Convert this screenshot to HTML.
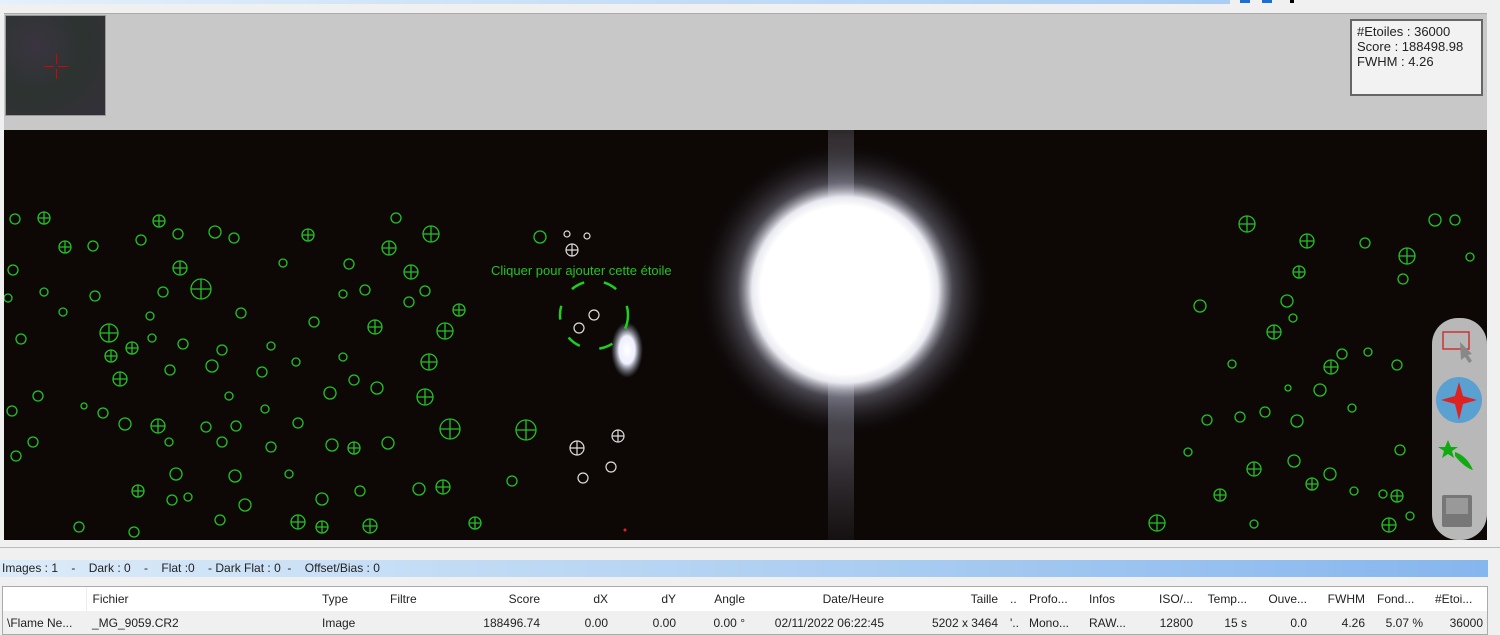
<!DOCTYPE html>
<html><head><meta charset="utf-8"><style>
*{margin:0;padding:0;box-sizing:border-box}
body{width:1500px;height:635px;overflow:hidden;background:#f0f0f0;font-family:"Liberation Sans",sans-serif;position:relative}
.a{position:absolute}
table{border-collapse:collapse;font-size:12px;color:#222}
td{height:24px;padding:0 6px;white-space:nowrap;overflow:hidden}
</style></head><body>
<div class="a" style="left:0;top:0;width:1230px;height:4px;background:linear-gradient(90deg,#e4f0fb,#a9cdf3)"></div>
<div class="a" style="left:1240px;top:0;width:10px;height:3px;background:#1a6fd0"></div>
<div class="a" style="left:1262px;top:0;width:10px;height:3px;background:#1a6fd0"></div>
<div class="a" style="left:1290px;top:0;width:4px;height:3px;background:#000"></div>
<div class="a" style="left:4px;top:13px;width:1483px;height:118px;background:#c8c8c8;border-top:1px solid #aaa"></div>
<div class="a" style="left:5px;top:15px;width:101px;height:101px;background:radial-gradient(circle at 30% 30%,#3a3440,#2c3330 50%,#35303a);border:1px solid #999"></div>
<div class="a" style="left:44px;top:66px;width:10px;height:1px;background:#d00"></div>
<div class="a" style="left:58px;top:66px;width:10px;height:1px;background:#d00"></div>
<div class="a" style="left:56px;top:54px;width:1px;height:10px;background:#d00"></div>
<div class="a" style="left:56px;top:69px;width:1px;height:10px;background:#d00"></div>
<div class="a" style="left:1350px;top:19px;width:133px;height:77px;background:#f2f2f2;border:2px solid #666;font-size:13px;line-height:15px;color:#222;padding:3px 5px">#Etoiles : 36000<br>Score : 188498.98<br>FWHM : 4.26</div>
<div class="a" style="left:4px;top:130px;width:1483px;height:410px;background:#0d0706;overflow:hidden">
<svg width="1483" height="410" viewBox="4 130 1483 410" style="position:absolute;left:0;top:0">
<defs><radialGradient id="g"><stop offset="0" stop-color="#fff"/><stop offset="0.56" stop-color="#fff"/><stop offset="0.62" stop-color="#e8e8f0"/><stop offset="0.72" stop-color="#778" stop-opacity=".55"/><stop offset="1" stop-color="#000" stop-opacity="0"/></radialGradient>
<radialGradient id="b"><stop offset="0" stop-color="#fff"/><stop offset="0.5" stop-color="#eef"/><stop offset="1" stop-color="#89a" stop-opacity="0"/></radialGradient>
<linearGradient id="v" x1="0" y1="0" x2="0" y2="1"><stop offset="0" stop-color="#aab" stop-opacity=".2"/><stop offset="0.4" stop-color="#ccd" stop-opacity=".9"/><stop offset="1" stop-color="#667" stop-opacity=".1"/></linearGradient></defs>
<rect x="828" y="130" width="26" height="410" fill="url(#v)"/>
<circle cx="845" cy="290" r="150" fill="url(#g)"/>
<ellipse cx="627" cy="350" rx="16" ry="28" fill="url(#b)"/>
<g fill="none" stroke="#22c422" stroke-width="1.3">
<circle cx="15" cy="219" r="5"/><circle cx="93" cy="246" r="5"/><circle cx="141" cy="240" r="5"/><circle cx="178" cy="234" r="5"/><circle cx="215" cy="232" r="6"/><circle cx="234" cy="238" r="5"/><circle cx="396" cy="218" r="5"/><circle cx="13" cy="270" r="5"/><circle cx="283" cy="263" r="4"/><circle cx="349" cy="264" r="5"/><circle cx="44" cy="292" r="4"/><circle cx="95" cy="296" r="5"/><circle cx="163" cy="292" r="5"/><circle cx="343" cy="294" r="4"/><circle cx="365" cy="290" r="5"/><circle cx="409" cy="302" r="5"/><circle cx="425" cy="291" r="5"/><circle cx="8" cy="298" r="4"/><circle cx="63" cy="312" r="4"/><circle cx="241" cy="313" r="5"/><circle cx="314" cy="322" r="5"/><circle cx="21" cy="339" r="5"/><circle cx="150" cy="316" r="4"/><circle cx="152" cy="338" r="4"/><circle cx="183" cy="344" r="5"/><circle cx="222" cy="350" r="5"/><circle cx="271" cy="346" r="4"/><circle cx="296" cy="362" r="4"/><circle cx="343" cy="357" r="4"/><circle cx="170" cy="370" r="5"/><circle cx="212" cy="366" r="6"/><circle cx="262" cy="372" r="5"/><circle cx="354" cy="380" r="5"/><circle cx="377" cy="388" r="6"/><circle cx="38" cy="396" r="5"/><circle cx="330" cy="393" r="6"/><circle cx="265" cy="409" r="4"/><circle cx="12" cy="411" r="5"/><circle cx="84" cy="406" r="3"/><circle cx="103" cy="413" r="5"/><circle cx="125" cy="424" r="6"/><circle cx="206" cy="427" r="5"/><circle cx="236" cy="426" r="5"/><circle cx="298" cy="423" r="5"/><circle cx="33" cy="442" r="5"/><circle cx="169" cy="442" r="4"/><circle cx="222" cy="442" r="5"/><circle cx="332" cy="445" r="6"/><circle cx="388" cy="443" r="6"/><circle cx="16" cy="456" r="5"/><circle cx="271" cy="447" r="5"/><circle cx="176" cy="474" r="6"/><circle cx="235" cy="476" r="6"/><circle cx="289" cy="474" r="4"/><circle cx="172" cy="500" r="5"/><circle cx="188" cy="497" r="4"/><circle cx="245" cy="505" r="6"/><circle cx="322" cy="499" r="6"/><circle cx="419" cy="489" r="6"/><circle cx="512" cy="481" r="5"/><circle cx="360" cy="491" r="5"/><circle cx="220" cy="520" r="5"/><circle cx="79" cy="527" r="5"/><circle cx="134" cy="532" r="5"/><circle cx="540" cy="237" r="6"/><circle cx="229" cy="396" r="4"/>
<circle cx="1435" cy="220" r="6"/><circle cx="1455" cy="220" r="5"/><circle cx="1365" cy="243" r="5"/><circle cx="1470" cy="257" r="4"/><circle cx="1403" cy="279" r="5"/><circle cx="1287" cy="301" r="6"/><circle cx="1200" cy="306" r="6"/><circle cx="1293" cy="318" r="4"/><circle cx="1342" cy="354" r="5"/><circle cx="1368" cy="352" r="4"/><circle cx="1232" cy="364" r="4"/><circle cx="1397" cy="365" r="5"/><circle cx="1320" cy="390" r="6"/><circle cx="1288" cy="388" r="3"/><circle cx="1240" cy="417" r="5"/><circle cx="1265" cy="412" r="5"/><circle cx="1297" cy="421" r="6"/><circle cx="1352" cy="408" r="4"/><circle cx="1294" cy="461" r="6"/><circle cx="1330" cy="474" r="6"/><circle cx="1354" cy="491" r="4"/><circle cx="1383" cy="494" r="4"/><circle cx="1188" cy="452" r="4"/><circle cx="1254" cy="524" r="4"/><circle cx="1410" cy="516" r="4"/><circle cx="1207" cy="420" r="5"/><circle cx="1400" cy="450" r="5"/>
</g>
<g fill="none" stroke="#22c422" stroke-width="1.3">
<g transform="translate(44,218)"><circle r="6"/><path d="M-6 0H6M0-6V6"/></g>
<g transform="translate(159,221)"><circle r="6"/><path d="M-6 0H6M0-6V6"/></g>
<g transform="translate(308,235)"><circle r="6"/><path d="M-6 0H6M0-6V6"/></g>
<g transform="translate(431,234)"><circle r="8"/><path d="M-8 0H8M0-8V8"/></g>
<g transform="translate(389,248)"><circle r="7"/><path d="M-7 0H7M0-7V7"/></g>
<g transform="translate(65,247)"><circle r="6"/><path d="M-6 0H6M0-6V6"/></g>
<g transform="translate(180,268)"><circle r="7"/><path d="M-7 0H7M0-7V7"/></g>
<g transform="translate(411,272)"><circle r="7"/><path d="M-7 0H7M0-7V7"/></g>
<g transform="translate(201,289)"><circle r="10"/><path d="M-10 0H10M0-10V10"/></g>
<g transform="translate(459,310)"><circle r="6"/><path d="M-6 0H6M0-6V6"/></g>
<g transform="translate(375,327)"><circle r="7"/><path d="M-7 0H7M0-7V7"/></g>
<g transform="translate(445,331)"><circle r="8"/><path d="M-8 0H8M0-8V8"/></g>
<g transform="translate(109,333)"><circle r="9"/><path d="M-9 0H9M0-9V9"/></g>
<g transform="translate(132,348)"><circle r="6"/><path d="M-6 0H6M0-6V6"/></g>
<g transform="translate(111,356)"><circle r="6"/><path d="M-6 0H6M0-6V6"/></g>
<g transform="translate(429,362)"><circle r="8"/><path d="M-8 0H8M0-8V8"/></g>
<g transform="translate(120,379)"><circle r="7"/><path d="M-7 0H7M0-7V7"/></g>
<g transform="translate(425,397)"><circle r="8"/><path d="M-8 0H8M0-8V8"/></g>
<g transform="translate(158,426)"><circle r="7"/><path d="M-7 0H7M0-7V7"/></g>
<g transform="translate(450,429)"><circle r="10"/><path d="M-10 0H10M0-10V10"/></g>
<g transform="translate(526,430)"><circle r="10"/><path d="M-10 0H10M0-10V10"/></g>
<g transform="translate(354,448)"><circle r="6"/><path d="M-6 0H6M0-6V6"/></g>
<g transform="translate(138,491)"><circle r="6"/><path d="M-6 0H6M0-6V6"/></g>
<g transform="translate(298,522)"><circle r="7"/><path d="M-7 0H7M0-7V7"/></g>
<g transform="translate(322,527)"><circle r="6"/><path d="M-6 0H6M0-6V6"/></g>
<g transform="translate(370,526)"><circle r="7"/><path d="M-7 0H7M0-7V7"/></g>
<g transform="translate(443,487)"><circle r="7"/><path d="M-7 0H7M0-7V7"/></g>
<g transform="translate(475,523)"><circle r="6"/><path d="M-6 0H6M0-6V6"/></g>
<g transform="translate(1247,224)"><circle r="8"/><path d="M-8 0H8M0-8V8"/></g>
<g transform="translate(1307,241)"><circle r="7"/><path d="M-7 0H7M0-7V7"/></g>
<g transform="translate(1407,256)"><circle r="8"/><path d="M-8 0H8M0-8V8"/></g>
<g transform="translate(1299,272)"><circle r="6"/><path d="M-6 0H6M0-6V6"/></g>
<g transform="translate(1274,332)"><circle r="7"/><path d="M-7 0H7M0-7V7"/></g>
<g transform="translate(1331,367)"><circle r="7"/><path d="M-7 0H7M0-7V7"/></g>
<g transform="translate(1254,469)"><circle r="7"/><path d="M-7 0H7M0-7V7"/></g>
<g transform="translate(1312,484)"><circle r="6"/><path d="M-6 0H6M0-6V6"/></g>
<g transform="translate(1397,496)"><circle r="6"/><path d="M-6 0H6M0-6V6"/></g>
<g transform="translate(1220,495)"><circle r="6"/><path d="M-6 0H6M0-6V6"/></g>
<g transform="translate(1157,523)"><circle r="8"/><path d="M-8 0H8M0-8V8"/></g>
<g transform="translate(1389,525)"><circle r="7"/><path d="M-7 0H7M0-7V7"/></g>
</g>
<g fill="none" stroke="#ddd" stroke-width="1.2">
<circle cx="567" cy="234" r="3"/><circle cx="587" cy="236" r="3"/><circle cx="594" cy="315" r="5"/><circle cx="579" cy="328" r="5"/><circle cx="611" cy="467" r="5"/><circle cx="583" cy="478" r="5"/>
<g transform="translate(572,250)"><circle r="6"/><path d="M-6 0H6M0-6V6"/></g>
<g transform="translate(577,448)"><circle r="7"/><path d="M-7 0H7M0-7V7"/></g>
<g transform="translate(618,436)"><circle r="6"/><path d="M-6 0H6M0-6V6"/></g>
</g>
<circle cx="594" cy="315" r="34" fill="none" stroke="#1ed01e" stroke-width="2.5" stroke-dasharray="14 20"/>
<text x="491" y="275" fill="#22c422" font-size="13" font-family="Liberation Sans">Cliquer pour ajouter cette étoile</text>
<circle cx="625" cy="530" r="1.5" fill="#d22"/>
<rect x="1432" y="318" width="55" height="222" rx="26" fill="#c8c8c8" fill-opacity=".92"/>
<rect x="1443" y="332" width="26" height="17" fill="none" stroke="#c33" stroke-width="1.5"/>
<path d="M1460 342l12 12-4 1 4 6-3 2-4-6-4 3z" fill="#888"/>
<circle cx="1459" cy="400" r="23" fill="#5aa0d0"/>
<path d="M1459 382l4 14 14 4-14 4-4 16-4-16-14-4 14-4z" fill="#d22"/>
<path d="M1448 440l3 7 7 0-6 4 2 7-6-4-6 4 2-7-6-4 7 0z" fill="#1a1"/>
<path d="M1455 452q12 4 18 18q-8-2-18-14z" fill="#1a1"/>
<rect x="1442" y="495" width="30" height="32" rx="2" fill="#777"/>
<rect x="1446" y="498" width="22" height="16" fill="#999"/>
</svg></div>
<div class="a" style="left:0;top:547px;width:1500px;height:1px;background:#bbb"></div>
<div class="a" style="left:0;top:560px;width:1488px;height:17px;background:linear-gradient(90deg,#dcebf9,#a9ccf1 60%,#86b6ee);font-size:12px;line-height:17px;color:#222;padding-left:2px;white-space:pre">Images : 1    -    Dark : 0    -    Flat :0    - Dark Flat : 0  -    Offset/Bias : 0</div>
<div class="a" style="left:2px;top:586px;width:1486px;height:49px;background:#fff;border:1px solid #aaa;overflow:hidden">
<table style="table-layout:fixed;width:1486px">
<colgroup><col style="width:83px"><col style="width:230px"><col style="width:68px"><col style="width:70px"><col style="width:92px"><col style="width:68px"><col style="width:68px"><col style="width:69px"><col style="width:139px"><col style="width:114px"><col style="width:19px"><col style="width:60px"><col style="width:58px"><col style="width:58px"><col style="width:54px"><col style="width:60px"><col style="width:58px"><col style="width:58px"><col style="width:60px"></colgroup>
<tr style="background:#fff"><td style="border-right:1px solid #eee"></td><td>Fichier</td><td>Type</td><td>Filtre</td><td align="right">Score</td><td align="right">dX</td><td align="right">dY</td><td align="right">Angle</td><td align="right">Date/Heure</td><td align="right">Taille</td><td>..</td><td>Profo...</td><td>Infos</td><td align="right">ISO/...</td><td align="right">Temp...</td><td align="right">Ouve...</td><td align="right">FWHM</td><td>Fond...</td><td>#Etoi...</td></tr>
<tr style="background:#f0f0f0"><td style="padding-left:4px">\Flame Ne...</td><td>_MG_9059.CR2</td><td>Image</td><td></td><td align="right">188496.74</td><td align="right">0.00</td><td align="right">0.00</td><td align="right">0.00 °</td><td align="right">02/11/2022 06:22:45</td><td align="right">5202 x 3464</td><td>'..</td><td>Mono...</td><td>RAW...</td><td align="right">12800</td><td align="right">15 s</td><td align="right">0.0</td><td align="right">4.26</td><td align="right">5.07 %</td><td align="right">36000</td></tr>
</table></div>
</body></html>
